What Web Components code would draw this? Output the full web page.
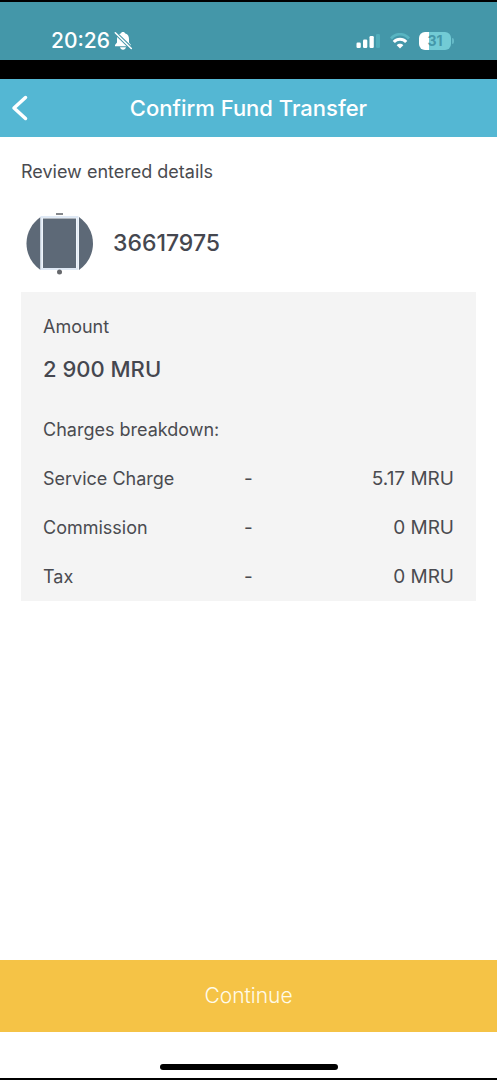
<!DOCTYPE html>
<html lang="en">
<head>
<meta charset="utf-8">
<meta name="viewport" content="width=device-width, initial-scale=1">
<title>Confirm Fund Transfer</title>
<style>
  html, body { margin: 0; height: 100%; background: #fff; }
  body { font-family: Inter, "Liberation Sans", sans-serif; font-size: 18px; line-height: 26px; color: #4a4b50; }
</style>
</head>
<body>
<transfer-screen>
  <status-bar slot="top" time="20:26" battery="31"></status-bar>
  <nav-header slot="top">Confirm Fund Transfer</nav-header>
  <recipient-row>36617975</recipient-row>
  <charges-card amount="2 900 MRU"></charges-card>
  <action-footer slot="bottom">Continue</action-footer>
</transfer-screen>
<script>
function define(name, html, setup) {
  const template = document.createElement('template');
  template.innerHTML = html;
  customElements.define(name, class extends HTMLElement {
    constructor() {
      super();
      this.attachShadow({ mode: 'open' }).append(template.content.cloneNode(true));
    }
    connectedCallback() { if (setup) setup(this, this.shadowRoot); }
  });
}

define('transfer-screen', `
  <style>
    :host { display: flex; flex-direction: column; min-height: 100vh; box-sizing: border-box; border-block: 2px solid #000; }
    main { flex: 1; padding: 22px 21px; }
    h2 { margin: 0; font: inherit; }
  </style>
  <slot name="top"></slot>
  <main><h2>Review entered details</h2><slot></slot></main>
  <slot name="bottom"></slot>`);

define('status-bar', `
  <style>
    :host { display: flex; align-items: flex-end; justify-content: space-between; height: 58px; box-sizing: border-box;
      padding: 0 43px 6px 51px; background: #4497a9; color: #fff; }
    div { display: flex; align-items: center; height: 26px; }
    time { font-size: 21px; font-weight: 500; }
    .bell { margin-left: 3px; }
    .wifi { margin: 0 9px; }
    .battery { display: flex; align-items: center; }
    .level { display: flex; align-items: center; justify-content: center; width: 32px; height: 18px; border-radius: 6px;
      background: linear-gradient(90deg, #fff 31%, #72cbd5 31%); color: #4497a9; font-size: 14px; font-weight: 700; line-height: 18px; }
    .tip { width: 2px; height: 6px; margin-left: 1px; border-radius: 0 2px 2px 0; background: #65b9c6; }
    svg { display: block; }
  </style>
  <div>
    <time></time>
    <svg class="bell" width="20" height="20" viewBox="0 0 20 20" role="img" aria-label="Silent">
      <path d="M10 1c-1.200 0-2 .6-2.300 1.500C5 3.300 4 5.500 4 8v3.500L2 14v1.300h16V14l-2-2.500V8c0-2.500-1-4.700-3.700-5.500C12 1.600 11.200 1 10 1z" fill="#fff"/>
      <path d="M7 16.300h6c-.4 1.600-1.400 2.400-3 2.400s-2.600-.8-3-2.400z" fill="#fff"/>
      <path d="M2 1.500 19 18" stroke="#4497a9" stroke-width="3.600"/>
      <path d="M2.300 1.800 18.300 17.500" stroke="#fff" stroke-width="1.600" stroke-linecap="round"/>
    </svg>
  </div>
  <div>
    <svg width="25" height="14" viewBox="0 0 25 14" role="img" aria-label="Signal">
      <g fill="#fff"><rect x=".5" y="8.500" width="4.300" height="5.500" rx="1.200"/><rect x="7" y="5.500" width="4.300" height="8.500" rx="1.200"/><rect x="13.500" y="2" width="4.300" height="12" rx="1.200"/></g>
      <rect x="20" y="0" width="4" height="14" rx="1.200" fill="#50adbb"/>
    </svg>
    <svg class="wifi" width="20" height="16" viewBox="0 0 20 16" role="img" aria-label="Wi-Fi" fill="none">
      <path d="M1 5.500C6-.2 14-.2 19 5.500" stroke="#58b5c2" stroke-width="2.700"/>
      <path d="M3.800 8.900c3.400-3.700 9-3.700 12.400 0" stroke="#fff" stroke-width="3"/>
      <path d="M10 15.500 6.700 12.200c1.800-1.900 4.800-1.900 6.600 0z" fill="#fff"/>
    </svg>
    <span class="battery"><span class="level"></span><span class="tip"></span></span>
  </div>`, (el, root) => {
    root.querySelector('time').textContent = el.getAttribute('time');
    root.querySelector('.level').textContent = el.getAttribute('battery');
  });

define('nav-header', `
  <style>
    :host { display: grid; grid-template-columns: 48px 1fr 48px; align-items: center; height: 58px;
      border-top: 19px solid #000; background: #54b7d3; color: #fff; }
    button { display: flex; align-items: center; height: 58px; padding: 0 0 0 10px; border: 0; background: none; color: inherit; }
    h1 { margin: 0; font-size: 22px; line-height: 30px; font-weight: 500; text-align: center; white-space: nowrap; }
  </style>
  <button aria-label="Back"><svg width="18" height="26" viewBox="0 0 18 26" fill="none" stroke="currentColor" stroke-width="3.500" stroke-linecap="round" stroke-linejoin="round"><path d="M15.500 2.500 4 13l11.500 10.500"/></svg></button>
  <h1><slot></slot></h1>`);

define('recipient-row', `
  <style>
    :host { display: flex; align-items: center; gap: 18px; margin: 23px 0 14px 4px; color: #45474f; font-size: 23px; line-height: 30px; font-weight: 500; }
    svg { display: block; }
  </style>
  <svg width="70" height="70" viewBox="0 0 70 70" aria-hidden="true">
    <g fill="#5d6977">
      <path d="M15.500 9v53C7 56 1.500 46.500 1.500 35.500S7 15 15.500 9z"/>
      <path d="M54 9v53c8.500-6 14-15.500 14-26.500S62.500 15 54 9z"/>
      <rect x="18" y="10.500" width="33" height="49.500"/>
    </g>
    <path d="M16.500 9h36v52h-36z" fill="none" stroke="#dfe9f5" stroke-width="2"/>
    <rect x="31" y="5" width="7" height="2" fill="#85888c"/>
    <circle cx="34.500" cy="64" r="2.500" fill="#66686c"/>
  </svg>
  <span><slot></slot></span>`);

define('charges-card', `
  <style>
    :host { display: block; padding: 22px 22px 0; background: #f4f4f4; }
    h3, p { margin: 0; font: inherit; }
    .amount { margin: 13px 0 32px; color: #45474f; font-size: 22px; line-height: 32px; font-weight: 500; }
    table { width: 100%; border-collapse: collapse; table-layout: fixed; }
    caption { padding-bottom: 11px; text-align: left; }
    th, td { height: 49px; padding: 0; font-weight: 400; text-align: left; white-space: nowrap; }
    th { width: 45%; }
    .dash { width: 10%; font-size: 19px; text-align: center; }
    .value { width: 45%; font-size: 19px; text-align: right; }
  </style>
  <h3>Amount</h3>
  <p class="amount"></p>
  <table>
    <caption>Charges breakdown:</caption>
    <tbody>
      <tr><th scope="row">Service Charge</th><td class="dash">-</td><td class="value">5.17 MRU</td></tr>
      <tr><th scope="row">Commission</th><td class="dash">-</td><td class="value">0 MRU</td></tr>
      <tr><th scope="row">Tax</th><td class="dash">-</td><td class="value">0 MRU</td></tr>
    </tbody>
  </table>`, (el, root) => {
    root.querySelector('.amount').textContent = el.getAttribute('amount');
  });

define('action-footer', `
  <style>
    :host { display: flex; flex-direction: column; align-items: center; }
    button { width: 100%; height: 72px; padding: 0; border: 0; background: #f5c346; color: #fffbe9; font: inherit; font-size: 21px; font-weight: 300; }
    .home { width: 178px; height: 6px; margin: 32px 0 8px; border-radius: 3px; background: #000; }
  </style>
  <button><slot></slot></button>
  <div class="home"></div>`);
</script>
</body>
</html>
